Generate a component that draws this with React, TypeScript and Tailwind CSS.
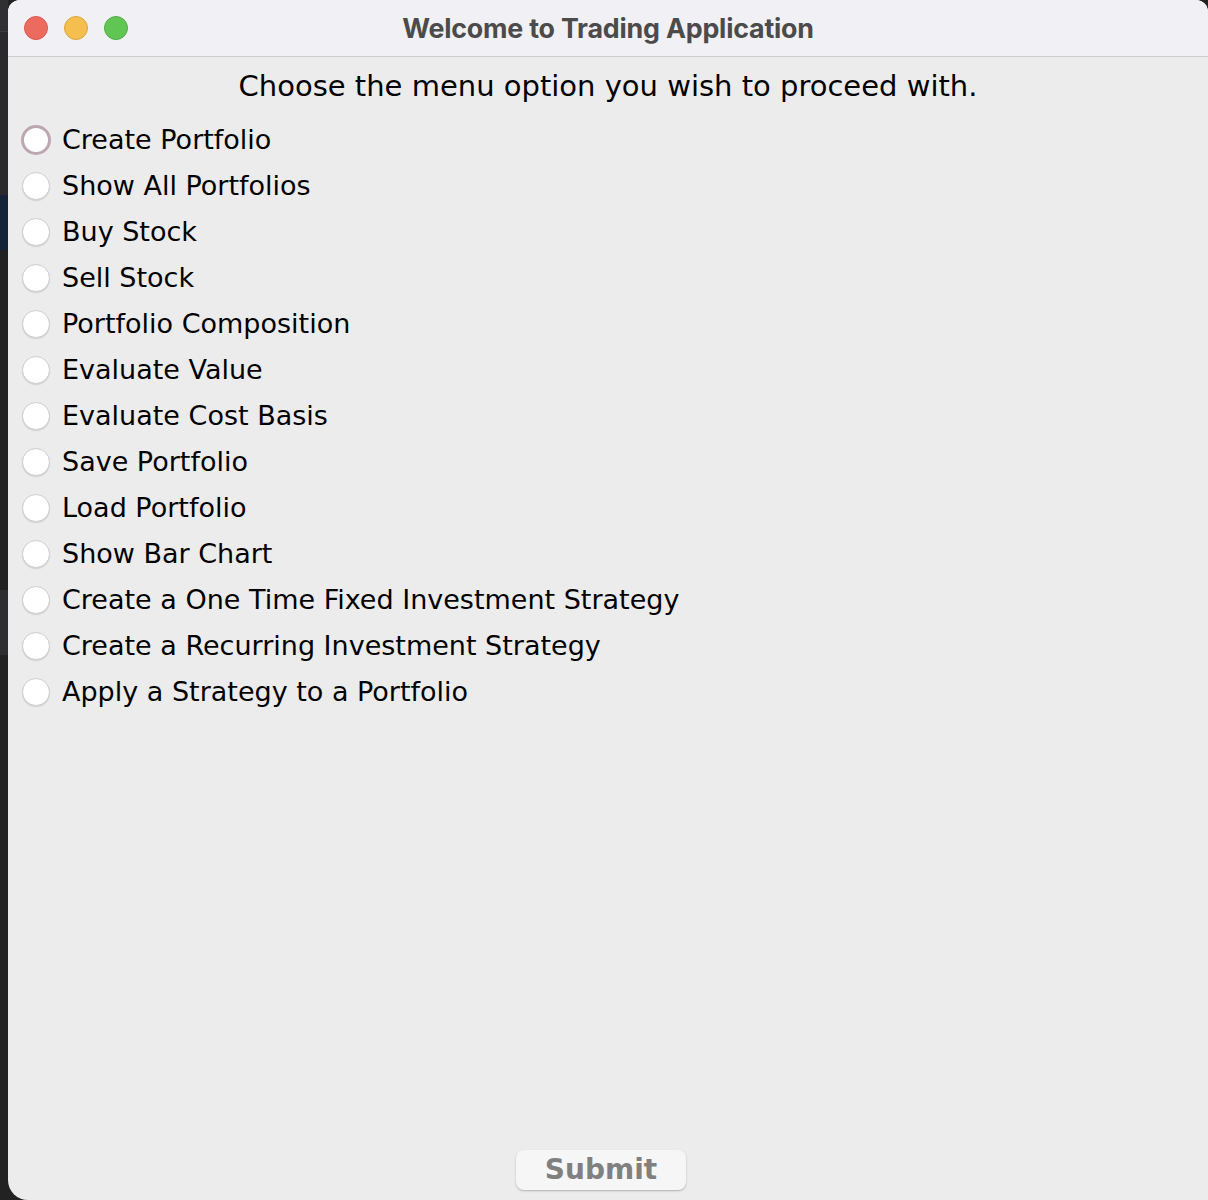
const options = [
  "Create Portfolio",
  "Show All Portfolios",
  "Buy Stock",
  "Sell Stock",
  "Portfolio Composition",
  "Evaluate Value",
  "Evaluate Cost Basis",
  "Save Portfolio",
  "Load Portfolio",
  "Show Bar Chart",
  "Create a One Time Fixed Investment Strategy",
  "Create a Recurring Investment Strategy",
  "Apply a Strategy to a Portfolio",
];

const Radio = ({ focused }: { focused?: boolean }) => (
  <span className="w-[30px] h-[30px] flex items-center justify-center shrink-0">
    {focused ? (
      <span className="w-[30px] h-[30px] rounded-full bg-white border-[3px] border-[#bca6b2]" />
    ) : (
      <span className="w-[28px] h-[28px] rounded-full bg-white border border-[#cfcfcf] shadow-[0_1px_1px_rgba(0,0,0,0.12)]" />
    )}
  </span>
);

export default function App() {
  return (
    <div className="w-[1208px] h-[1200px] flex bg-[#222222] overflow-hidden">
      {/* desktop behind the window */}
      <div className="w-[8px] flex flex-col shrink-0">
        <div className="h-[32px] bg-[#303032] border-b border-[#3c3c3e]" />
        <div className="h-[163px] bg-[#2a2a2c]" />
        <div className="h-[55px] bg-[#14233a]" />
        <div className="h-[340px] bg-[#222222]" />
        <div className="h-[65px] bg-[#2e2e30]" />
        <div className="flex-1 bg-[#222222]" />
      </div>

      <div className="flex-1 flex flex-col bg-[#ececec] rounded-tl-[12px] rounded-tr-[12px] rounded-bl-[20px] overflow-hidden">
        <div className="h-[57px] shrink-0 relative flex items-center justify-center bg-[#f1f0f4] border-b border-[#cbcbcb]">
          <div className="absolute left-[16px] top-[16px] flex gap-[16px]">
            <span className="w-[24px] h-[24px] rounded-full bg-[#ed6a5e] border border-[#d85a4f]" />
            <span className="w-[24px] h-[24px] rounded-full bg-[#f5bf4f] border border-[#dca53c]" />
            <span className="w-[24px] h-[24px] rounded-full bg-[#61c554] border border-[#50ad45]" />
          </div>
          <span className="font-['Inter',sans-serif] font-bold text-[26.8px] text-[#4b4b4b] tracking-[-0.2px]">
            Welcome to Trading Application
          </span>
        </div>

        <div className="flex-1 flex flex-col font-['DejaVu_Sans',sans-serif] text-black">
          <p className="text-center text-[29px] leading-[56px] mt-[1px]">
            Choose the menu option you wish to proceed with.
          </p>
          <ul className="flex flex-col pl-[13px] mt-[3px]">
            {options.map((o, i) => (
              <li key={o} className="h-[46px] flex items-center gap-[11px] text-[27px]">
                <Radio focused={i === 0} />
                <span>{o}</span>
              </li>
            ))}
          </ul>
          <div className="flex-1" />
          <div className="flex justify-center pb-[10px] pr-[14px]">
            <button className="w-[170px] h-[40px] rounded-[8px] bg-[#f6f6f6] shadow-[0_1px_2px_rgba(0,0,0,0.25)] text-[28px] font-bold text-[#808080] leading-none">
              Submit
            </button>
          </div>
        </div>
      </div>
    </div>
  );
}
